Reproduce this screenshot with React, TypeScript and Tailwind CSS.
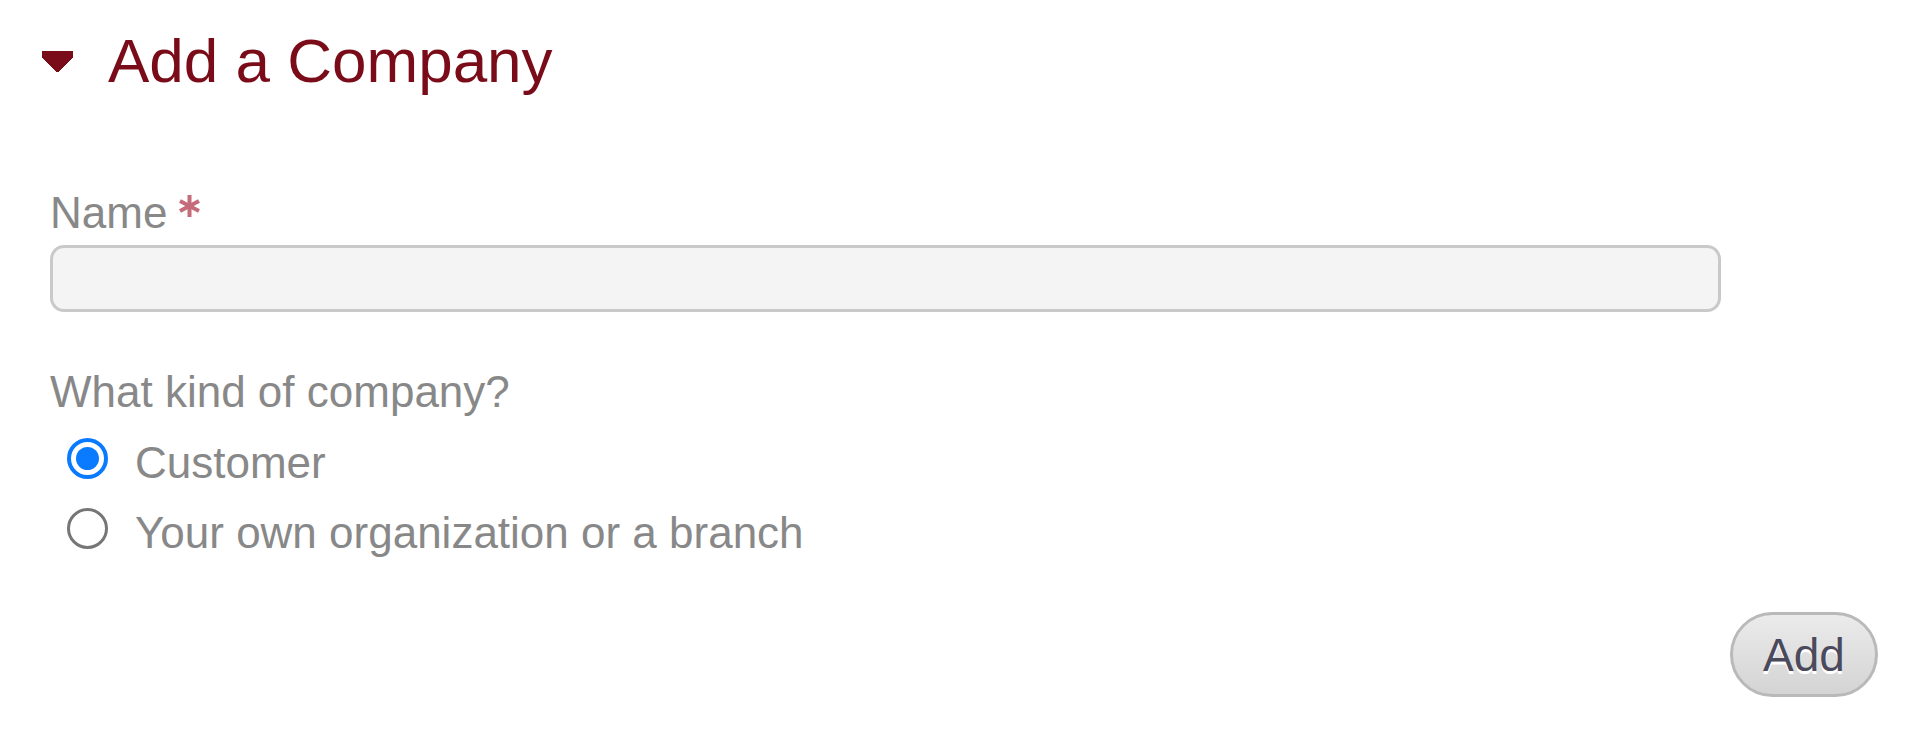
import React from "react";

function Caret() {
  return (
    <svg width="31" height="21" viewBox="0 0 31 21" shapeRendering="crispEdges" className="shrink-0">
      <polygon points="0,0 31,0 31,6 17,21 14,21 0,6" fill="#7a0c19" />
    </svg>
  );
}

function Asterisk() {
  return (
    <svg width="21" height="24" viewBox="0 0 21 24" className="ml-[12px] mt-[3px] shrink-0 opacity-80">
      <g stroke="#b8475a" strokeWidth="4" strokeLinecap="butt">
        <line x1="10.5" y1="1" x2="10.5" y2="23" />
        <line x1="1" y1="7" x2="20" y2="17" />
        <line x1="1" y1="17" x2="20" y2="7" />
      </g>
    </svg>
  );
}

function Radio({ checked, label }: { checked?: boolean; label: string }) {
  return (
    <label className="flex items-start h-[44px] text-[44px] leading-[44px] text-[#888888] cursor-pointer">
      {checked ? (
        <span className="ml-[17px] -mt-[3px] flex h-[41px] w-[41px] shrink-0 items-center justify-center rounded-full border-[4px] border-[#0a7aff] bg-white">
          <span className="h-[23px] w-[23px] rounded-full bg-[#0a7aff]" />
        </span>
      ) : (
        <span className="ml-[17px] -mt-[3px] h-[41px] w-[41px] shrink-0 rounded-full border-[3px] border-[#767676] bg-white" />
      )}
      <span className="ml-[27px] whitespace-nowrap">{label}</span>
    </label>
  );
}

export default function App() {
  return (
    <div className="min-h-screen bg-white font-['Liberation_Sans',Arial,sans-serif]">
      <div className="flex items-center pl-[42px] pt-[30px]">
        <Caret />
        <h1 className="ml-[35px] text-[62px] leading-[62px] text-[#7a0c19]">Add a Company</h1>
      </div>

      <form className="flex flex-col pl-[50px] pr-[42px]">
        <div className="mt-[99px] flex items-start">
          <span className="text-[44px] leading-[44px] text-[#888888]">Name</span>
          <Asterisk />
        </div>
        <input
          type="text"
          className="mt-[10px] h-[67px] w-[1671px] rounded-[14px] border-[3px] border-[#c9c9c9] bg-[#f4f4f4] px-4 text-[40px] outline-none"
        />

        <div className="mt-[58px] text-[44px] leading-[44px] text-[#888888]">What kind of company?</div>
        <div className="mt-[27px] flex flex-col gap-[26px]">
          <Radio checked label="Customer" />
          <Radio label="Your own organization or a branch" />
        </div>

        <div className="mt-[57px] flex justify-end">
          <button
            type="button"
            className="flex h-[85px] w-[148px] items-center justify-center rounded-full border-[3px] border-[#b9b9b9] bg-gradient-to-b from-[#ebebeb] to-[#d4d4d4] text-[46px] leading-none text-[#4b4a5c] [text-shadow:0_3px_0_#ffffff]"
          >
            Add
          </button>
        </div>
      </form>
    </div>
  );
}
